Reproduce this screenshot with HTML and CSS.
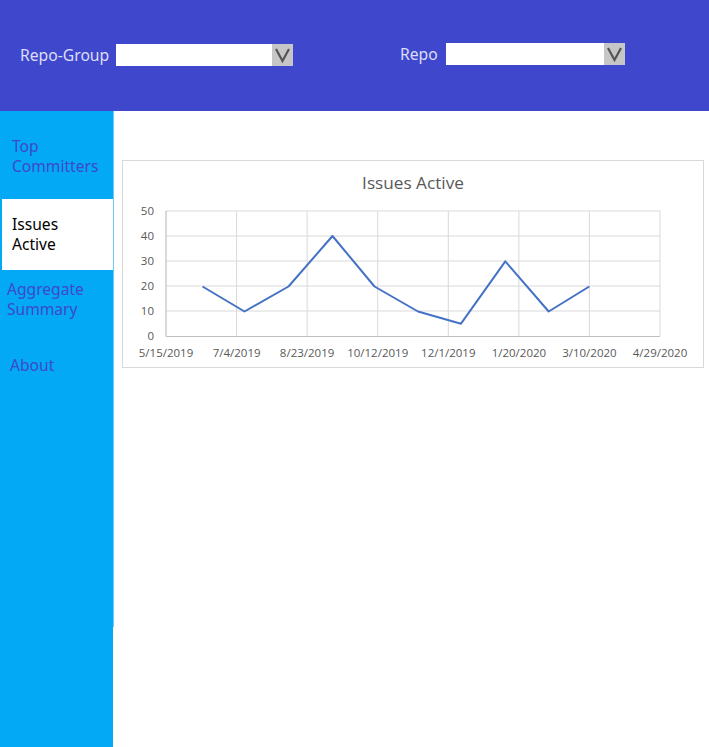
FILE: index.html
```html
<!DOCTYPE html>
<html>
<head>
<meta charset="utf-8">
<link rel="stylesheet" href="styles.css">
</head>
<body>
<header class="topbar">
  <div class="field field-group">
    <span class="field-label">Repo-Group</span>
    <div class="select select-group">
      <div class="select-value"></div>
      <div class="select-btn">
        <svg width="21" height="22" viewBox="0 0 21 22"><path d="M4 5 L10.5 17 L17 5" fill="none" stroke="#555" stroke-width="2.2"/></svg>
      </div>
    </div>
  </div>
  <div class="field field-repo">
    <span class="field-label">Repo</span>
    <div class="select select-repo">
      <div class="select-value"></div>
      <div class="select-btn">
        <svg width="21" height="22" viewBox="0 0 21 22"><path d="M4 5 L10.5 17 L17 5" fill="none" stroke="#555" stroke-width="2.2"/></svg>
      </div>
    </div>
  </div>
</header>
<div class="layout">
  <nav class="sidebar">
    <div class="nav-item nav-top">Top<br>Committers</div>
    <div class="nav-item nav-active">Issues<br>Active</div>
    <div class="nav-item nav-agg">Aggregate<br>Summary</div>
    <div class="nav-item nav-about">About</div>
  </nav>
  <div class="stripe"></div>
  <main class="content">
    <div class="chart">
      <svg width="580" height="206" viewBox="0 0 580 206" class="chart-svg">
        <text x="290" y="28" class="chart-title" text-anchor="middle">Issues Active</text>
        <g class="grid">
          <line x1="43" y1="50" x2="537" y2="50"/>
          <line x1="43" y1="75" x2="537" y2="75"/>
          <line x1="43" y1="100" x2="537" y2="100"/>
          <line x1="43" y1="125" x2="537" y2="125"/>
          <line x1="43" y1="150" x2="537" y2="150"/>
          <line x1="113.6" y1="50" x2="113.6" y2="175"/>
          <line x1="184.1" y1="50" x2="184.1" y2="175"/>
          <line x1="254.7" y1="50" x2="254.7" y2="175"/>
          <line x1="325.3" y1="50" x2="325.3" y2="175"/>
          <line x1="395.9" y1="50" x2="395.9" y2="175"/>
          <line x1="466.4" y1="50" x2="466.4" y2="175"/>
          <line x1="537" y1="50" x2="537" y2="175"/>
        </g>
        <g class="axis">
          <line x1="43" y1="50" x2="43" y2="175.5"/>
          <line x1="43" y1="175.5" x2="537" y2="175.5"/>
        </g>
        <g class="ylab" text-anchor="end">
          <text x="31" y="54">50</text>
          <text x="31" y="79">40</text>
          <text x="31" y="104">30</text>
          <text x="31" y="129">20</text>
          <text x="31" y="154">10</text>
          <text x="31" y="179">0</text>
        </g>
        <g class="xlab" text-anchor="middle">
          <text x="43" y="195.5">5/15/2019</text>
          <text x="113.6" y="195.5">7/4/2019</text>
          <text x="184.1" y="195.5">8/23/2019</text>
          <text x="254.7" y="195.5">10/12/2019</text>
          <text x="325.3" y="195.5">12/1/2019</text>
          <text x="395.9" y="195.5">1/20/2020</text>
          <text x="466.4" y="195.5">3/10/2020</text>
          <text x="537" y="195.5">4/29/2020</text>
        </g>
        <polyline class="series" points="79.5,125.5 121.5,150.5 165.5,125.5 209.5,75 251.5,125.5 295,150.5 338,162.7 382.3,100.3 425.7,150.5 466.3,125.5"/>
      </svg>
    </div>
  </main>
</div>
</body>
</html>
```

FILE: styles.css
```css
html, body {
  margin: 0;
  padding: 0;
  background: #ffffff;
  font-family: "Noto Sans", "Open Sans", sans-serif;
}

.topbar {
  height: 111px;
  background: #3f48cc;
  display: flex;
  align-items: flex-start;
  box-sizing: border-box;
  padding-left: 20px;
}

.field {
  display: flex;
  align-items: center;
}

.field-group {
  width: 380px;
  margin-top: 44px;
}

.field-repo {
  margin-top: 43px;
}

.field-label {
  color: #dcdef8;
  font-size: 15.7px;
  line-height: 22px;
}

.field-group .field-label {
  width: 96px;
}

.field-repo .field-label {
  width: 46px;
}

.select {
  display: flex;
  height: 22px;
}

.select-group {
  width: 177px;
}

.select-repo {
  width: 179px;
}

.select-value {
  flex: 1;
  background: #ffffff;
}

.select-btn {
  width: 21px;
  background: #c6c6c6;
  display: flex;
}

.layout {
  display: flex;
  align-items: flex-start;
  min-height: 636px;
}

.sidebar {
  width: 113px;
  min-height: 636px;
  background: #03a9f4;
  padding-top: 25px;
  box-sizing: border-box;
  flex-shrink: 0;
}

.stripe {
  width: 1px;
  height: 516px;
  background: #6ccaf6;
  flex-shrink: 0;
}

.nav-item {
  font-size: 15.6px;
  line-height: 20px;
  color: #3f48cc;
}

.nav-top {
  padding-left: 12px;
}

.nav-active {
  margin-top: 23px;
  margin-left: 2px;
  height: 71px;
  box-sizing: border-box;
  padding: 15px 0 0 10px;
  background: #ffffff;
  color: #000000;
}

.nav-agg {
  margin-top: 9px;
  padding-left: 7px;
}

.nav-about {
  margin-top: 36px;
  padding-left: 10px;
}

.content {
  flex: 1;
  padding: 49px 0 0 8px;
}

.chart {
  width: 580px;
  height: 206px;
  border: 1px solid #d9d9d9;
  background: #ffffff;
}

.chart-svg {
  display: block;
}

.chart-title {
  font-family: "Open Sans", sans-serif;
  font-size: 17.2px;
  fill: #595959;
}

.grid line {
  stroke: #d9d9d9;
  stroke-width: 1;
}

.axis line {
  stroke: #bfbfbf;
  stroke-width: 1.2;
}

.ylab text, .xlab text {
  font-family: "Open Sans", sans-serif;
  font-size: 11.5px;
  fill: #595959;
}

.series {
  fill: none;
  stroke: #4472c4;
  stroke-width: 2;
  stroke-linejoin: round;
}
```
